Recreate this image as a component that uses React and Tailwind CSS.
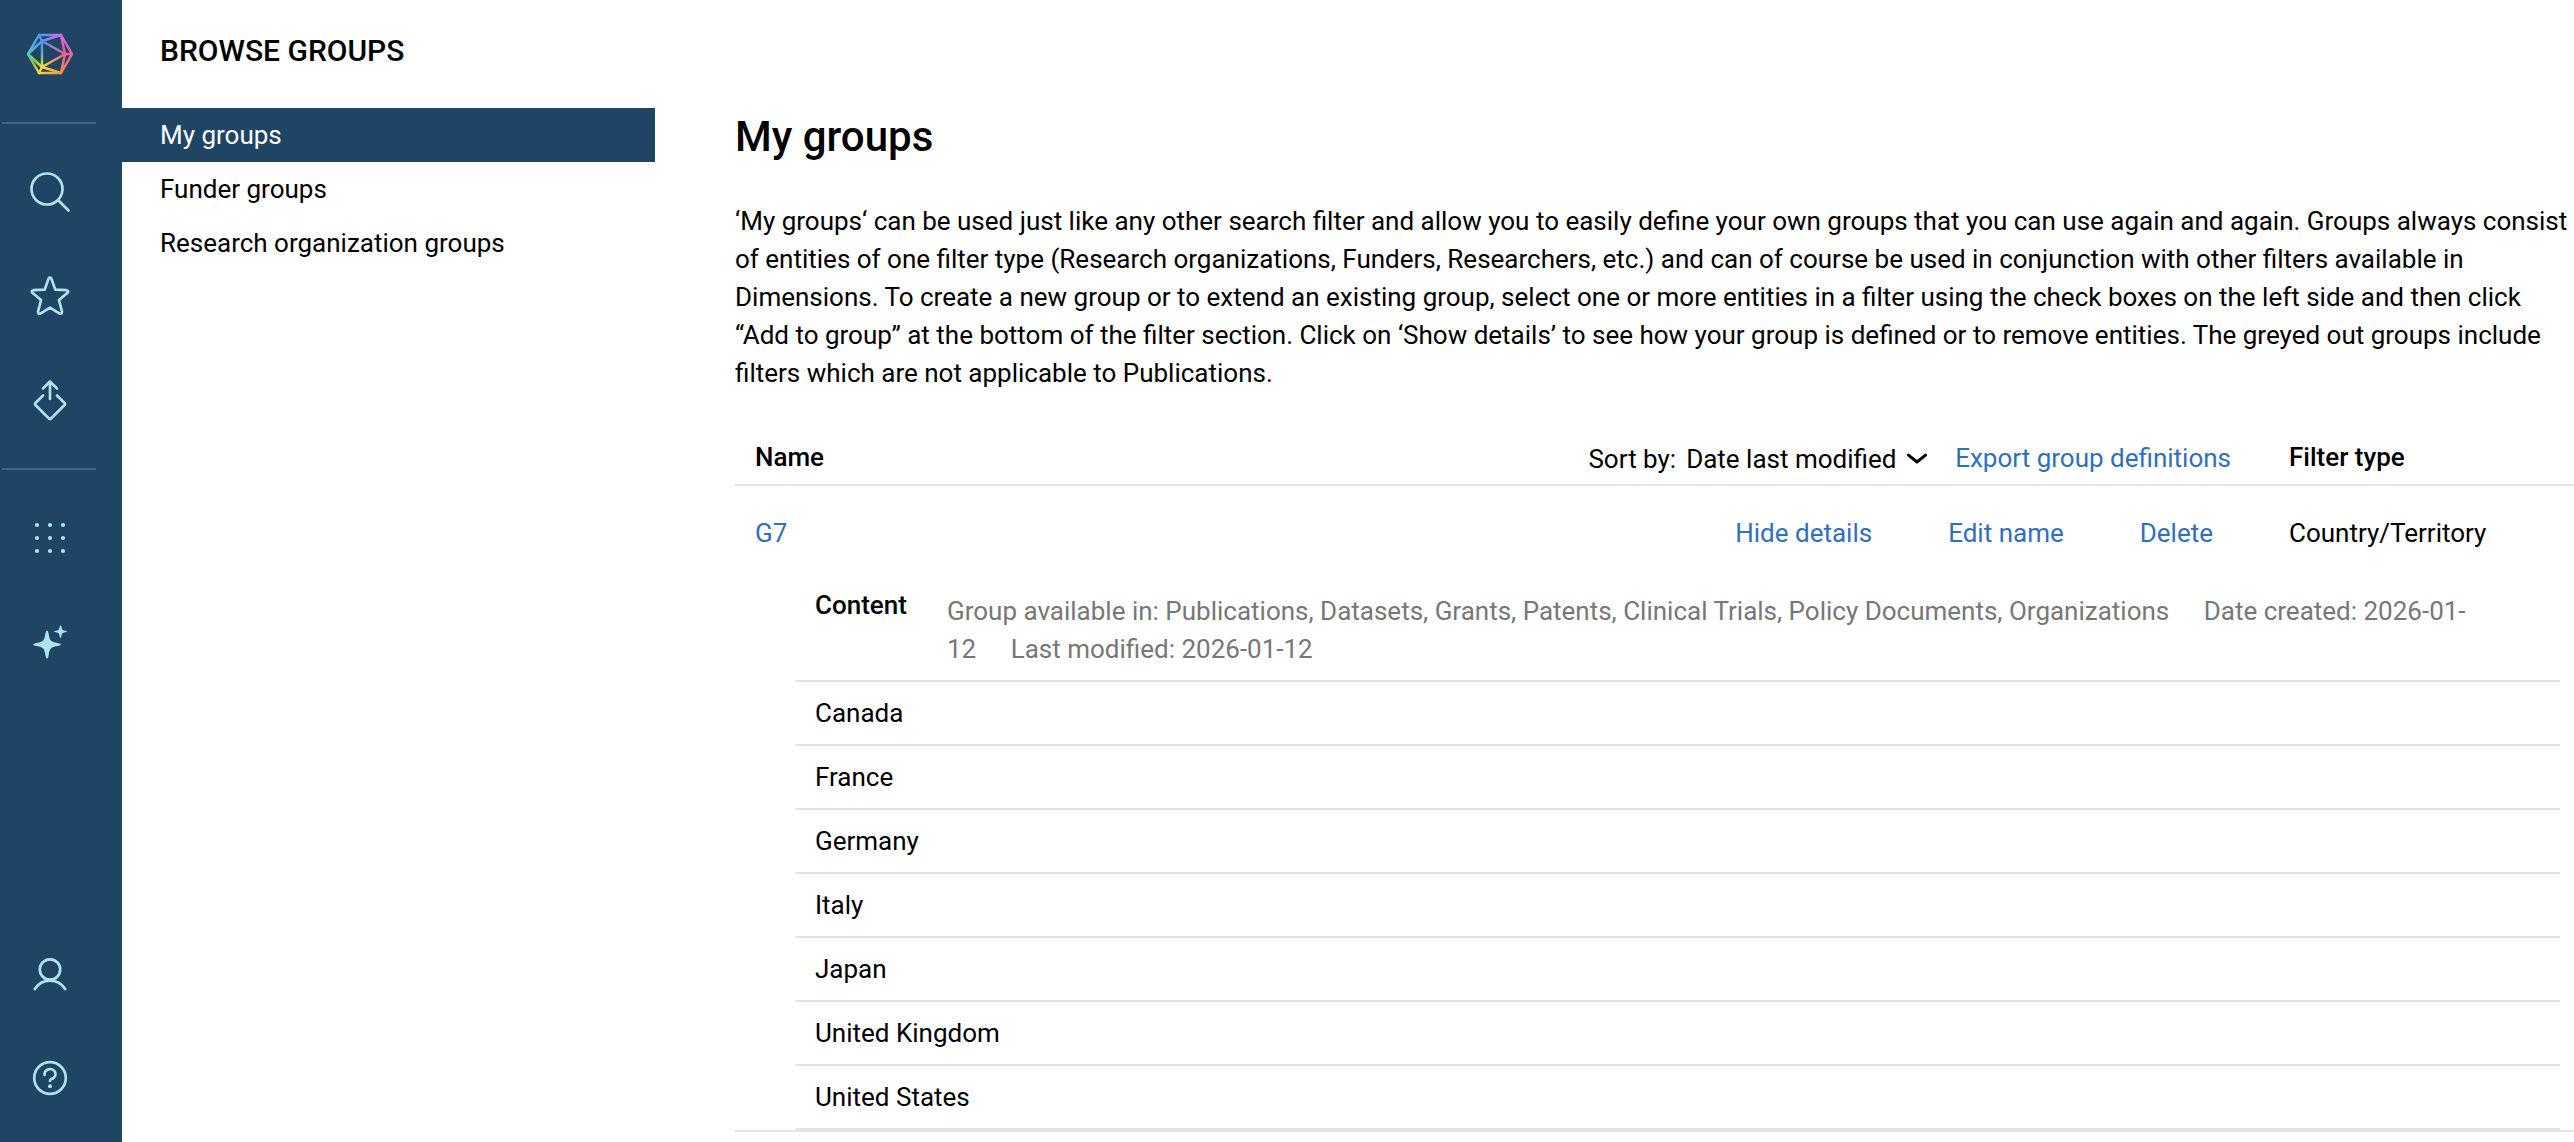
import React, { useState } from 'react';

const countries = ['Canada', 'France', 'Germany', 'Italy', 'Japan', 'United Kingdom', 'United States'];

const navItems = ['My groups', 'Funder groups', 'Research organization groups'];

// Logo corners: outer hexagon (l, tl, tr, r, br, bl) and inner triangle (a, b, c)
const points = {
  l: [0, 22, '#5bbfc0'],
  tl: [11, 3, '#4a9cf5'],
  tr: [33, 3, '#c86ce6'],
  r: [44, 22, '#f0609a'],
  br: [33, 41, '#f0923a'],
  bl: [11, 41, '#f3d93a'],
  a: [14, 9, '#5a94f8'],
  b: [14, 35, '#f5dc38'],
  c: [37, 22, '#ee5f96'],
};

const edges = [
  ['l', 'tl'], ['tl', 'tr'], ['tr', 'r'], ['r', 'br'], ['br', 'bl'], ['bl', 'l'],
  ['a', 'b'], ['b', 'c'], ['c', 'a'],
  ['tl', 'a'], ['tr', 'a'], ['l', 'a'], ['l', 'b'], ['bl', 'b'], ['br', 'b'],
  ['tr', 'c'], ['r', 'c'], ['br', 'c'],
];

const Logo = () => (
  <svg viewBox="-1 0 46 44" className="h-11 w-[46px]" fill="none" strokeWidth="2.4" strokeLinecap="round" aria-hidden="true">
    {edges.map(([from, to]) => {
      const [x1, y1, c1] = points[from];
      const [x2, y2, c2] = points[to];
      const id = `edge-${from}-${to}`;
      return (
        <g key={id}>
          <linearGradient id={id} gradientUnits="userSpaceOnUse" x1={x1} y1={y1} x2={x2} y2={y2}>
            <stop offset="0" stopColor={c1} />
            {id === 'edge-a-b' && <stop offset="0.45" stopColor="#4fb0d8" />}
            {id === 'edge-a-b' && <stop offset="0.7" stopColor="#9ccb45" />}
            {(id === 'edge-bl-l' || id === 'edge-l-b') && <stop offset="0.5" stopColor="#96c94a" />}
            <stop offset="1" stopColor={c2} />
          </linearGradient>
          <line x1={x1} y1={y1} x2={x2} y2={y2} stroke={`url(#${id})`} />
        </g>
      );
    })}
  </svg>
);

const Icon = ({ children }) => (
  <svg
    viewBox="0 0 44 44"
    className="size-11"
    fill="none"
    stroke="currentColor"
    strokeWidth="2.7"
    strokeLinecap="round"
    strokeLinejoin="round"
    aria-hidden="true"
  >
    {children}
  </svg>
);

const SideButton = ({ label, children }) => (
  <button type="button" aria-label={label} className="cursor-pointer">
    <Icon>{children}</Icon>
  </button>
);

const Sidebar = () => (
  <aside className="flex w-[122px] shrink-0 flex-col bg-[#204463] text-[#aee3ec]">
    <div className="flex w-[100px] grow flex-col items-center pt-8 pb-[42px]">
      <a href="#home" aria-label="Home">
        <Logo />
      </a>
      <hr className="my-[46px] ml-0.5 w-[94px] self-start border-t-2 border-[#386a8a]" />
      <div className="flex flex-col gap-[60px]">
        <SideButton label="Search">
          <circle cx="19" cy="19" r="15.5" />
          <path d="M30.5 30.5 40.5 40.5" />
        </SideButton>
        <SideButton label="Favorites">
          <path d="M20.6 4.6Q22 2.8 23.4 4.6L27.3 15.6 38.6 16.2Q41.2 16.8 39.6 18.8L31 26 34 37.6Q34 40.2 31.6 39.6L22 33.6 12.4 39.6Q10 40.2 10 37.6L13 26 4.4 18.8Q2.8 16.8 5.4 16.2L16.7 15.6Z" />
        </SideButton>
        <SideButton label="Export">
          <path d="M22 21V3.5M15 10.5 22 3.5 29 10.5" />
          <path d="M15 17.5 7.2 25.3Q6.6 26 7.2 26.7L21.2 40.7Q22 41.3 22.8 40.7L36.8 26.7Q37.4 26 36.8 25.3L29 17.5" />
        </SideButton>
      </div>
      <hr className="my-[46px] ml-0.5 w-[94px] self-start border-t-2 border-[#386a8a]" />
      <div className="flex flex-col gap-[60px]">
        <SideButton label="Apps">
          <g fill="currentColor" stroke="none">
            {[9, 22, 35].map((y) => [9, 22, 35].map((x) => <circle key={`${x}-${y}`} cx={x} cy={y} r="2.1" />))}
          </g>
        </SideButton>
        <SideButton label="Assistant">
          <g fill="currentColor" stroke="none">
            <path d="M19 10.5Q20.2 10.5 20.6 13.5C21.6 20.5 22.5 21.8 29.5 23Q33 23.6 33 24.6 33 25.6 29.5 26C22.5 27.2 21.6 28.5 20.6 35.6Q20.2 38.6 19 38.6 18 38.6 17.5 35.6C16.4 28.5 15.5 27.2 8.5 26Q5 25.6 5 24.6 5 23.6 8.5 23C15.5 21.8 16.4 20.5 17.5 13.5Q18 10.5 19 10.5Z" />
            <path d="M32.5 5.2Q33.1 5.2 33.4 6.8C34 9.8 34.3 10.2 37 10.7Q38.9 11 38.9 11.5 38.9 12 37 12.3C34.3 12.8 34 13.2 33.4 16.2Q33.1 17.8 32.5 17.8 31.9 17.8 31.6 16.2C31 13.2 30.7 12.8 28 12.3Q26.1 12 26.1 11.5 26.1 11 28 10.7C30.7 10.2 31 9.8 31.6 6.8Q31.9 5.2 32.5 5.2Z" />
          </g>
        </SideButton>
      </div>
      <div className="mt-auto flex flex-col gap-[60px]">
        <SideButton label="Account">
          <circle cx="22" cy="17.5" r="10.2" />
          <path d="M6.8 37A18 18 0 0 1 37.2 37" />
        </SideButton>
        <SideButton label="Help">
          <circle cx="22" cy="22" r="15.8" />
          <path d="M16.6 19A5.5 5 0 1 1 25 22.3Q22 23.6 22 24.8" />
          <circle cx="22" cy="30.3" r="2" fill="currentColor" stroke="none" />
        </SideButton>
      </div>
    </div>
  </aside>
);

const GroupNav = ({ active, onSelect }) => (
  <nav className="w-[533px] shrink-0">
    <h2 className="pt-8 pb-[38px] pl-[38px] text-[30px] leading-[38px] font-medium">BROWSE GROUPS</h2>
    <ul>
      {navItems.map((item) => (
        <li key={item}>
          <a
            href="#groups"
            onClick={() => onSelect(item)}
            className={`block py-2 pl-[38px] ${item === active ? 'bg-[#204463] text-white' : ''}`}
          >
            {item}
          </a>
        </li>
      ))}
    </ul>
  </nav>
);

const LinkButton = ({ children, onClick }) => (
  <button type="button" onClick={onClick} className="cursor-pointer text-[#2f6fbd]">
    {children}
  </button>
);

const GroupDetails = () => (
  <div className="mr-3.5 ml-[60px]">
    <div className="flex items-start border-b-2 border-[#e4e4e4] py-3 pr-20 pl-5">
      <h3 className="-mt-1.5 w-[132px] shrink-0 font-medium">Content</h3>
      <p className="text-[#777]">
        Group available in: Publications, Datasets, Grants, Patents, Clinical Trials, Policy Documents, Organizations{' '}
        <span className="ml-7">Date created: 2026-01-12</span> <span className="ml-7">Last modified: 2026-01-12</span>
      </p>
    </div>
    <ul>
      {countries.map((country) => (
        <li key={country} className="border-b-2 border-[#e4e4e4] px-5 py-3">
          {country}
        </li>
      ))}
    </ul>
  </div>
);

const App = () => {
  const [active, setActive] = useState('My groups');
  const [sort, setSort] = useState('modified');
  const [open, setOpen] = useState(true);

  return (
    <div className="flex min-h-screen bg-white font-[Roboto,'Liberation_Sans',sans-serif] text-[26px] leading-[38px] text-black">
      <Sidebar />
      <GroupNav active={active} onSelect={setActive} />
      <main className="ml-20 min-w-0 flex-1 pt-[113px]">
        <h1 className="text-[42px] leading-[48px] font-medium">My groups</h1>
        <p className="mt-[41px]">
          ‘My groups‘ can be used just like any other search filter and allow you to easily define your own groups that
          you can use again and again. Groups always consist of entities of one filter type (Research organizations,
          Funders, Researchers, etc.) and can of course be used in conjunction with other filters available in
          Dimensions. To create a new group or to extend an existing group, select one or more entities in a filter
          using the check boxes on the left side and then click “Add to group” at the bottom of the filter section.
          Click on ‘Show details’ to see how your group is defined or to remove entities. The greyed out groups include
          filters which are not applicable to Publications.
        </p>
        <table className="mt-[46px] w-full text-left">
          <thead>
            <tr className="border-b-2 border-[#e4e4e4] align-top">
              <th className="pb-1.5 pl-5 font-medium">Name</th>
              <th className="pr-[38px] pb-1.5 font-normal">
                <div className="flex justify-end">
                  <label htmlFor="sort" className="mt-0.5 mr-2.5">
                    Sort by:
                  </label>
                  <div className="mt-0.5 mr-7 flex items-center gap-2.5">
                    <select
                      id="sort"
                      value={sort}
                      onChange={(e) => setSort(e.target.value)}
                      className="appearance-none bg-transparent"
                    >
                      <option value="modified">Date last modified</option>
                      <option value="name">Name</option>
                    </select>
                    <svg viewBox="0 0 20 12" className="h-3 w-5" fill="none" stroke="currentColor" strokeWidth="3" aria-hidden="true">
                      <path d="M1.5 2.2 10 9 18.5 2.2" strokeLinecap="round" strokeLinejoin="round" />
                    </svg>
                  </div>
                  <LinkButton>Export group definitions</LinkButton>
                </div>
              </th>
              <th className="w-[305px] pb-1.5 pl-5 font-medium">Filter type</th>
            </tr>
          </thead>
          <tbody>
            <tr className="align-top">
              <td className="py-7 pl-5">
                <a href="#g7" className="text-[#2f6fbd]">
                  G7
                </a>
              </td>
              <td className="py-7 pr-14">
                <div className="flex justify-end gap-[76px]">
                  <LinkButton onClick={() => setOpen(!open)}>{open ? 'Hide details' : 'Show details'}</LinkButton>
                  <LinkButton>Edit name</LinkButton>
                  <LinkButton>Delete</LinkButton>
                </div>
              </td>
              <td className="py-7 pl-5">Country/Territory</td>
            </tr>
            <tr className="border-b-2 border-[#e4e4e4]">
              <td colSpan={3}>{open && <GroupDetails />}</td>
            </tr>
          </tbody>
        </table>
      </main>
    </div>
  );
};

export default App;
